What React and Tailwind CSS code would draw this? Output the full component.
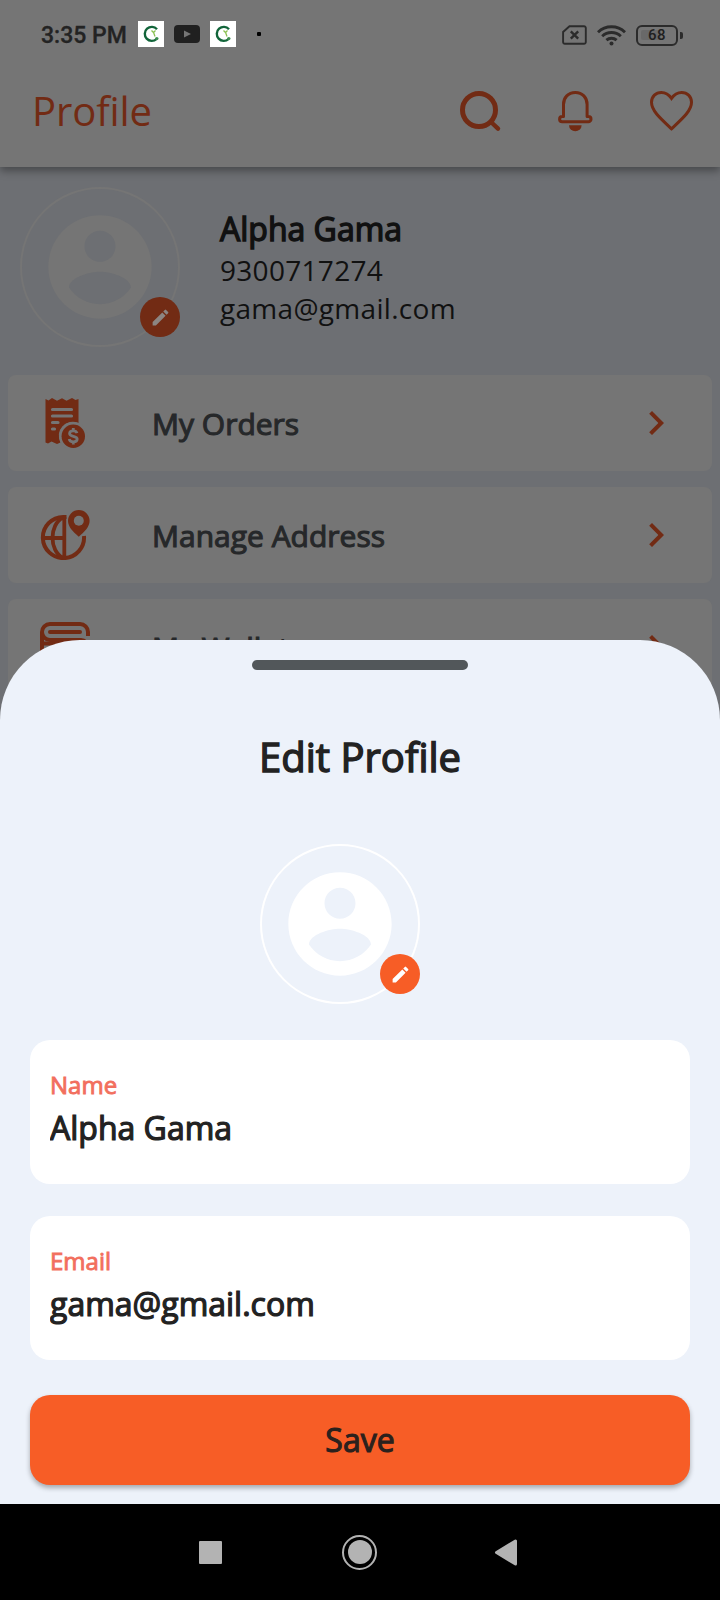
import React, { useState } from 'react';
import { MdChevronRight, MdEdit } from 'react-icons/md';

const StoreLogo = () => (
  <span className="flex h-[26px] w-[26px] items-center justify-center bg-white">
    <svg width="26" height="26" viewBox="0 0 26 26" fill="none">
      <path d="M19 8.2A7 7 0 1 0 18.6 18" stroke="#12653a" strokeWidth="2.4" />
      <path d="M13.5 9.5l2 2 2-2M15.6 11.5l1.4 4" stroke="#8cc152" strokeWidth="1.3" />
      <circle cx="18.8" cy="17.6" r="1.7" fill="#3c8c50" />
    </svg>
  </span>
);

const StatusBar = () => (
  <div className="flex h-[55px] items-start justify-between pt-[14px] pr-[37px] pl-[41px]">
    <div className="flex h-[40px] items-center">
      <span className="mt-[3px] w-[97px] whitespace-nowrap font-[Roboto,sans-serif] text-[23px] leading-10 font-medium text-[#232323] [-webkit-text-stroke:0.3px]">3:35 PM</span>
      <StoreLogo />
      <svg className="mx-[10px]" width="26" height="18" viewBox="0 0 26 18">
        <rect width="26" height="18" rx="4" fill="#202020" />
        <path d="M10 5.4v7.2L17 9z" fill="#757575" />
      </svg>
      <StoreLogo />
      <span className="ml-[21px] h-1 w-1 rounded-[1px] bg-black" />
    </div>

    <div className="flex h-[42px] items-center">
      <svg width="25" height="20" viewBox="0 0 25 20" fill="none" stroke="#2b2b2b" strokeWidth="1.9">
        <path d="M7.5 1.2H22a1.8 1.8 0 0 1 1.8 1.8v14a1.800 1.800 0 0 1-1.800 1.800H2.900A1.800 1.800 0 0 1 1.100 17V7z" />
        <path d="M8.800 6.400l7.400 7.200M16.200 6.400l-7.400 7.200" strokeWidth="2.400" />
      </svg>
      <svg className="ml-[10px]" width="29" height="21" viewBox="0 0 29 21" fill="none" stroke="#2b2b2b" strokeWidth="2.9">
        <path d="M1 7.200a19.500 19.500 0 0 1 27 0" />
        <path d="M5.200 11.200a13.500 13.500 0 0 1 18.600 0" />
        <path d="M9.400 15.200a7.600 7.600 0 0 1 10.200 0" />
        <circle cx="14.5" cy="18.6" r="2" fill="#2b2b2b" stroke="none" />
      </svg>
      <span className="relative ml-[10px] flex h-[21px] w-[42px] items-center justify-center rounded-[6px] border-[2.5px] border-[#2b2b2b]">
        <span className="absolute top-[3px] left-[3px] h-[10px] w-[20px] rounded-[2px] bg-[#696969]" />
        <span className="relative font-[Roboto,sans-serif] text-[15px] leading-none font-medium tracking-[0.5px] text-[#202020]">68</span>
      </span>
      <span className="ml-[2px] h-[7px] w-[3px] rounded-r-[2px] bg-[#2b2b2b]" />
    </div>
  </div>
);

const AppBar = () => (
  <div className="flex h-[112px] items-center justify-between pr-[26px] pl-[32px]">
    <h1 className="text-[40px] leading-none tracking-[-0.1px] text-[#722b14]">Profile</h1>
    <div className="flex items-center">
      <svg width="42" height="42" viewBox="0 0 42 42" fill="none" stroke="#722b14">
        <circle cx="19" cy="20" r="16.5" strokeWidth="5" />
        <path d="M31.500 32.500L38 38.700" strokeWidth="4.4" strokeLinecap="round" />
      </svg>
      <svg className="ml-[55px]" width="36" height="42" viewBox="0 0 36 42" fill="none" stroke="#722b14" strokeWidth="3">
        <path d="M6.500 26.600V14.500C6.500 7.500 11.200 2.500 18.300 2.500s11.800 5 11.800 12v12.100h1.300a2.500 2.500 0 0 1 0 5.200H5.200a2.500 2.500 0 0 1 0-5.200z" strokeLinejoin="round" />
        <path d="M12 35.200h12.600a6.300 6 0 0 1-12.600 0z" fill="#722b14" stroke="none" />
      </svg>
      <svg className="ml-[56px]" width="45" height="42" viewBox="0 0 45 42" fill="none" stroke="#722b14" strokeWidth="3">
        <path d="M22.500 38.800C12 29 2.500 21 2.500 12.300 2.500 6.300 7 2.400 12.300 2.400c4.400 0 7.600 2.100 10.200 6 2.600-3.900 5.800-6 10.200-6 5.300 0 9.800 3.900 9.800 9.900 0 8.700-9.500 16.700-20 26.500z" />
      </svg>
    </div>
  </div>
);

const Avatar = ({ dimmed }) => (
  <div className={`relative flex h-40 w-40 shrink-0 items-center justify-center rounded-full border-2 ${dimmed ? 'border-[#757575] text-[#757575]' : 'border-white text-white'}`}>
    <svg className="shrink-0" width="124" height="124" viewBox="0 0 24 24" fill="currentColor">
      <path d="M12 2C6.480 2 2 6.480 2 12s4.480 10 10 10 10-4.480 10-10S17.520 2 12 2zm0 3c1.660 0 3 1.340 3 3s-1.340 3-3 3-3-1.340-3-3 1.340-3 3-3zm0 14.200c-2.500 0-4.710-1.280-6-3.220.030-1.990 4-3.080 6-3.080 1.990 0 5.970 1.090 6 3.080-1.290 1.940-3.500 3.220-6 3.220z" />
    </svg>
    <button
      aria-label="Change photo"
      className={`absolute -right-0.5 bottom-2 flex h-10 w-10 items-center justify-center rounded-full ${dimmed ? 'bg-[#722b14] text-[#8c8582]' : 'bg-[#f75d26] text-white'}`}
    >
      <MdEdit size={21} />
    </button>
  </div>
);

const OrdersIcon = () => (
  <svg width="50" height="50" viewBox="0 0 50 50" fill="none">
    <path d="M5.500 1l3 1.500L12 0l5 2.800L22 .300l4.500 2.500L32 0l3.500 2 3-1v24a14 14 0 0 0-18 19.500L17 46l-5.500-2.500-3.500 2-2.500-1z" fill="#722b14" />
    <path d="M12.500 11.500h19M12.500 18h19M12.500 24.500h5.500M12.500 31h2" stroke="#757575" strokeWidth="3.200" strokeLinecap="round" />
    <circle cx="33.300" cy="38.300" r="14.200" fill="#757575" />
    <circle cx="33.300" cy="38.300" r="11.700" fill="#722b14" />
    <path d="M37 35.200c-.5-1.800-2-2.400-3.800-2.400-2 0-3.600 1-3.600 2.700 0 3.800 7.600 1.800 7.600 5.600 0 1.800-1.700 2.800-3.900 2.800s-3.700-.8-4.100-2.800M33.300 30v3M33.300 43.500v3" stroke="#757575" strokeWidth="2.800" />
  </svg>
);

const AddressIcon = () => (
  <svg width="50" height="50" viewBox="0 0 50 50" fill="none" stroke="#722b14" strokeWidth="4">
    <path d="M26.500 6.900H23.300A20.600 20.600 0 1 0 44 26" />
    <path d="M24.300 7v41M2.500 28h21.800M23 7.500c-14 7-14 33.500 0 40.500" strokeWidth="3.800" />
    <path d="M38.800 0A10.800 10.800 0 0 0 28 10.800c0 6 5 11 10.800 16 5.800-5 10.800-10 10.800-16A10.800 10.800 0 0 0 38.800 0z" fill="#722b14" stroke="none" />
    <circle cx="38.800" cy="10.800" r="5" fill="#757575" stroke="none" />
  </svg>
);

const WalletIcon = () => (
  <svg width="50" height="50" viewBox="0 0 50 50" fill="none" stroke="#722b14" strokeWidth="4">
    <path d="M48 14V10a8 8 0 0 0-8-8H10a8 8 0 0 0-8 8v30a8 8 0 0 0 8 8h30a8 8 0 0 0 8-8V25a7 7 0 0 0-7-7H10a8 8 0 0 1-8-8" />
    <path d="M10 10h30" strokeLinecap="round" />
    <path d="M4 21.500h40" strokeWidth="4" />
  </svg>
);

const menuItems = [
  { id: 'orders', label: 'My Orders', icon: OrdersIcon },
  { id: 'address', label: 'Manage Address', icon: AddressIcon },
  { id: 'wallet', label: 'My Wallet', icon: WalletIcon }
];

const Field = ({ label, value, onChange }) => (
  <label className="flex h-36 flex-col rounded-[20px] bg-white px-5 pt-[29px]">
    <span className="text-[24px] leading-8 text-[#f26f5e] [-webkit-text-stroke:0.9px]">{label}</span>
    <input
      className="mt-[4px] h-[46px] w-full bg-transparent p-0 text-[32px] leading-[46px] text-[#222222] outline-none [-webkit-text-stroke:1.2px]"
      value={value}
      onChange={(e) => onChange(e.target.value)}
    />
  </label>
);

const NavigationBar = () => (
  <div className="flex h-24 items-center bg-black pl-[199px]">
    <span className="h-[23px] w-[23px] rounded-[1px] bg-[#b3b3b3]" />
    <span className="ml-[120px] flex h-[35px] w-[35px] items-center justify-center rounded-full border-[2.5px] border-[#b3b3b3]">
      <span className="h-6 w-6 rounded-full bg-[#b3b3b3]" />
    </span>
    <svg className="ml-[117px]" width="23" height="27" viewBox="0 0 23 27">
      <path d="M2.500 13.500L21.500 2v23z" fill="#b3b3b3" stroke="#b3b3b3" strokeWidth="3" strokeLinejoin="round" />
    </svg>
  </div>
);

const App = () => {
  const [name, setName] = useState('Alpha Gama');
  const [email, setEmail] = useState('gama@gmail.com');

  return (
    <div className="relative h-[1600px] w-[720px] overflow-hidden bg-[#6d6f73] font-['Open_Sans',sans-serif]">
      <header className="relative h-[167px] bg-[#757575] shadow-[0_4px_8px_rgba(0,0,0,0.35)]">
        <StatusBar />
        <AppBar />
      </header>

      {/* Profile summary */}
      <section className="flex h-[208px] items-start gap-10 px-5 pt-5">
        <Avatar dimmed />
        <div className="pt-[19px] text-[28px] leading-[38px] tracking-[0.3px] text-[#111111]">
          <h2 className="text-[32px] leading-[46px] tracking-normal [-webkit-text-stroke:1.4px]">Alpha Gama</h2>
          <p className="-mt-px">9300717274</p>
          <p>gama@gmail.com</p>
        </div>
      </section>

      {/* Menu */}
      <nav className="flex flex-col gap-4 px-2">
        {menuItems.map(({ id, label, icon: Icon }) => (
          <a key={id} className="flex h-24 items-center rounded-lg bg-[#757575] px-8">
            <Icon />
            <span className="mt-0.5 ml-[62px] flex-1 text-[30px] leading-10 text-[#26282a] [-webkit-text-stroke:1.1px]">{label}</span>
            <MdChevronRight size={48} className="text-[#722b14]" />
          </a>
        ))}
      </nav>

      {/* Edit profile sheet */}
      <div className="absolute inset-x-0 bottom-0">
        <div className="flex h-[864px] flex-col rounded-t-[80px] bg-[#edf2fa] px-[30px] pt-5">
          <span className="h-[10px] w-[216px] self-center rounded-full bg-[#52575a]" />
          <h2 className="mt-[59px] text-center text-[40px] leading-[56px] text-[#222222] [-webkit-text-stroke:1.4px]">Edit Profile</h2>
          <div className="mt-[59px] mb-9 ml-[230px]">
            <Avatar />
          </div>
          <div className="flex flex-col gap-8">
            <Field label="Name" value={name} onChange={setName} />
            <Field label="Email" value={email} onChange={setEmail} />
          </div>
          <button className="mt-[35px] h-[90px] rounded-[20px] bg-[#f75d26] text-[32px] text-[#2b211d] shadow-[0_3px_5px_rgba(0,0,0,0.3)] [-webkit-text-stroke:1.1px]">
            Save
          </button>
        </div>
        <NavigationBar />
      </div>
    </div>
  );
};

export default App;
